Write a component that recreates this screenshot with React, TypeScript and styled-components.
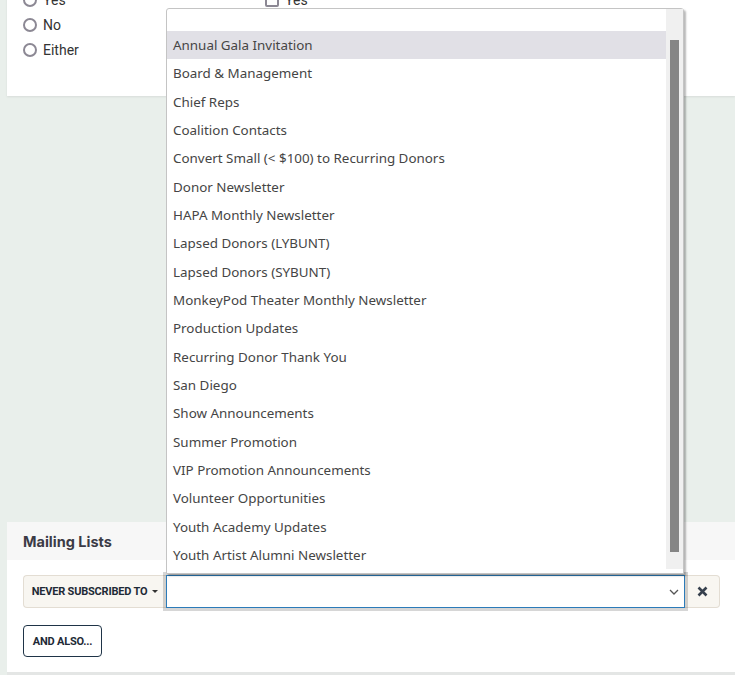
import React from "react";
import styled, { createGlobalStyle } from "styled-components";

const GlobalStyle = createGlobalStyle`
    body {
        margin: 0;
        background: #e9efeb;
        font-family: Roboto, "Liberation Sans", sans-serif;
        color: #333;
    }
`

const PageStyled = styled.div`
    position: relative;
    width: 735px;
    height: 675px;
    overflow: hidden;
`

const TopCardStyled = styled.div`
    margin: -13px 0 0 7px;
    height: 109px;
    background: #fff;
    box-shadow: 0 1px 2px rgba(0,0,0,0.08);
    display: grid;
    grid-template-columns: 242px 1fr;
    padding: 0 16px;
    box-sizing: border-box;
`

const OptionColumnStyled = styled.div`
    display: flex;
    flex-direction: column;
`

const OptionRowStyled = styled.label`
    height: 25px;
    display: flex;
    align-items: center;
    gap: 6px;
    font-size: 14px;
    color: #333;
`

const RadioStyled = styled.span`
    width: 10px;
    height: 10px;
    border: 2px solid #8c8894;
    border-radius: 50%;
    background: #fff;
`

const CheckStyled = styled.span`
    width: 10px;
    height: 10px;
    border: 2px solid #8c8894;
    border-radius: 2px;
    background: #fff;
`

const BottomCardStyled = styled.div`
    margin: 426px 0 0 7px;
    background: #fff;
    border-bottom: 3px solid #e4e6e5;
`

const CardHeaderStyled = styled.div`
    height: 38px;
    background: #f7f7f7;
    padding-left: 16px;
    display: flex;
    align-items: center;
    font-family: Inter, Roboto, sans-serif;
    font-weight: 700;
    font-size: 14.5px;
    color: #3b3b46;
`

const CardBodyStyled = styled.div`
    padding: 15px 15px 15px 16px;
    display: flex;
    flex-direction: column;
    gap: 17px;
`

const FilterRowStyled = styled.div`
    display: flex;
    height: 33px;
`

const PrefixButtonStyled = styled.button`
    width: 143px;
    height: 33px;
    background: #f8f6f1;
    border: 1px solid #e3ddd3;
    border-right: none;
    border-radius: 4px 0 0 4px;
    font-family: Roboto, sans-serif;
    font-weight: 700;
    font-size: 11px;
    letter-spacing: -0.2px;
    color: #1e2a36;
    display: flex;
    align-items: center;
    justify-content: center;
    gap: 5px;
    padding: 0;
`

const CaretStyled = styled.span`
    width: 0;
    height: 0;
    border-left: 3px solid transparent;
    border-right: 3px solid transparent;
    border-top: 3px solid #333;
`

const SelectBoxStyled = styled.div`
    width: 519px;
    height: 33px;
    box-sizing: border-box;
    border: 1px solid #2b7bb9;
    box-shadow: 0 0 0 3px rgba(0,0,0,0.16);
    background: #fff;
    display: flex;
    align-items: center;
    justify-content: flex-end;
    padding-right: 5px;
    position: relative;
    z-index: 1;
`

const ClearButtonStyled = styled.button`
    width: 35px;
    height: 33px;
    background: #f8f6f1;
    border: 1px solid #e3ddd3;
    border-left: none;
    border-radius: 0 4px 4px 0;
    display: flex;
    align-items: center;
    justify-content: center;
    padding: 0;
`

const OutlineButtonStyled = styled.button`
    align-self: flex-start;
    width: 79px;
    height: 32px;
    background: #fff;
    border: 1px solid #1f3447;
    border-radius: 4px;
    font-family: Roboto, sans-serif;
    font-weight: 700;
    font-size: 11px;
    letter-spacing: -0.2px;
    color: #1e2a36;
    padding: 0;
`

const DropdownStyled = styled.div`
    position: absolute;
    left: 166px;
    top: 8px;
    width: 518px;
    height: 566px;
    box-sizing: border-box;
    background: #fff;
    border: 1px solid #c4c4c4;
    border-radius: 3px 3px 0 0;
    box-shadow: 2px 2px 2px rgba(0,0,0,0.28);
    display: flex;
    z-index: 2;
`

const ListStyled = styled.div`
    flex: 1;
    padding-top: 22px;
`

const ItemStyled = styled.div<{active?: boolean}>`
    height: 28.33px;
    display: flex;
    align-items: center;
    padding-left: 6px;
    font-family: "Noto Sans", "Open Sans", sans-serif;
    font-size: 13.4px;
    color: #454545;
    background: ${(props) => props.active ? "#e1e0e6" : "transparent"};
`

const ScrollTrackStyled = styled.div`
    width: 17px;
    background: #f0f0f0;
    padding: 31px 4px 0 4px;
    box-sizing: border-box;
    height: 560px;
`

const ScrollThumbStyled = styled.div`
    width: 9px;
    height: 512px;
    background: #858585;
`

const lists = [
    "Annual Gala Invitation",
    "Board & Management",
    "Chief Reps",
    "Coalition Contacts",
    "Convert Small (< $100) to Recurring Donors",
    "Donor Newsletter",
    "HAPA Monthly Newsletter",
    "Lapsed Donors (LYBUNT)",
    "Lapsed Donors (SYBUNT)",
    "MonkeyPod Theater Monthly Newsletter",
    "Production Updates",
    "Recurring Donor Thank You",
    "San Diego",
    "Show Announcements",
    "Summer Promotion",
    "VIP Promotion Announcements",
    "Volunteer Opportunities",
    "Youth Academy Updates",
    "Youth Artist Alumni Newsletter",
]

const App = () => {
    return (
        <PageStyled>
            <GlobalStyle />
            <TopCardStyled>
                <OptionColumnStyled>
                    <OptionRowStyled><RadioStyled />Yes</OptionRowStyled>
                    <OptionRowStyled><RadioStyled />No</OptionRowStyled>
                    <OptionRowStyled><RadioStyled />Either</OptionRowStyled>
                </OptionColumnStyled>
                <OptionColumnStyled>
                    <OptionRowStyled><CheckStyled />Yes</OptionRowStyled>
                </OptionColumnStyled>
            </TopCardStyled>

            <BottomCardStyled>
                <CardHeaderStyled>Mailing Lists</CardHeaderStyled>
                <CardBodyStyled>
                    <FilterRowStyled>
                        <PrefixButtonStyled>NEVER SUBSCRIBED TO <CaretStyled /></PrefixButtonStyled>
                        <SelectBoxStyled>
                            <svg width="10" height="6" viewBox="0 0 10 6">
                                <path d="M1 1 L5 5 L9 1" fill="none" stroke="#555" strokeWidth="1.3" />
                            </svg>
                        </SelectBoxStyled>
                        <ClearButtonStyled>
                            <svg width="11" height="11" viewBox="0 0 11 11">
                                <path d="M1.5 1.5 L9.5 9.5 M9.5 1.5 L1.5 9.5" stroke="#36404d" strokeWidth="2.6" />
                            </svg>
                        </ClearButtonStyled>
                    </FilterRowStyled>
                    <OutlineButtonStyled>AND ALSO...</OutlineButtonStyled>
                </CardBodyStyled>
            </BottomCardStyled>

            <DropdownStyled>
                <ListStyled>
                    {lists.map((name, i) => (
                        <ItemStyled key={name} active={i === 0}>{name}</ItemStyled>
                    ))}
                </ListStyled>
                <ScrollTrackStyled>
                    <ScrollThumbStyled />
                </ScrollTrackStyled>
            </DropdownStyled>
        </PageStyled>
    )
}

export default App
